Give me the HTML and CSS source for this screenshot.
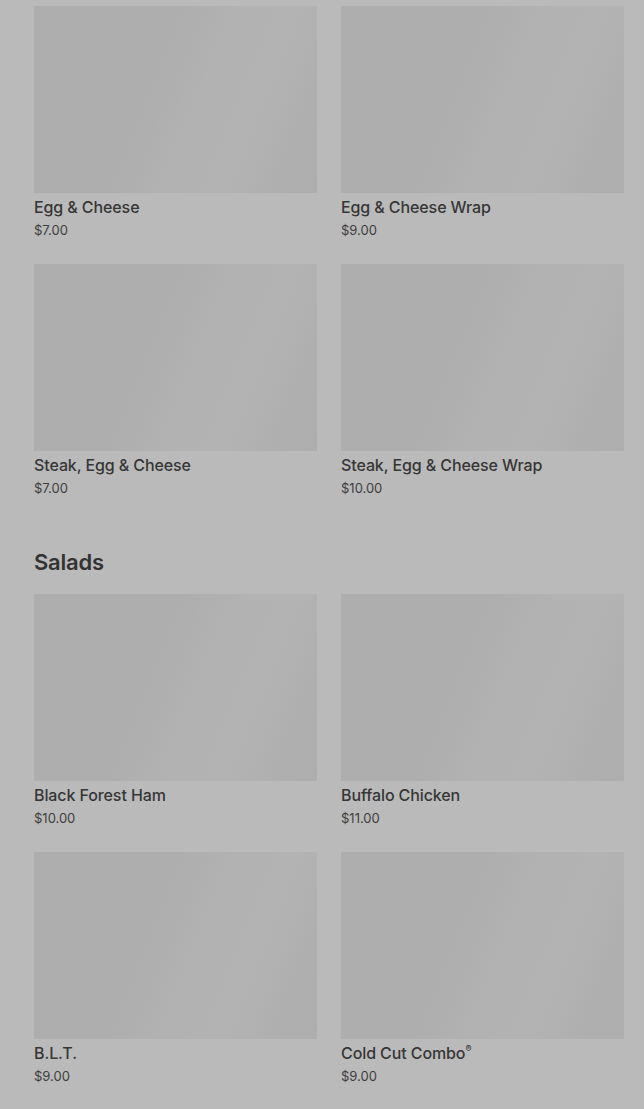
FILE: index.html
```html
<!DOCTYPE html>
<html lang="en">
<head>
<meta charset="utf-8">
<title>Menu</title>
<link rel="stylesheet" href="styles.css">
</head>
<body>
<main class="menu">
  <section class="section">
    <div class="grid">
      <div class="card"><div class="thumb"></div><div class="name">Egg &amp; Cheese</div><div class="price">$7.00</div></div>
      <div class="card"><div class="thumb"></div><div class="name">Egg &amp; Cheese Wrap</div><div class="price">$9.00</div></div>
      <div class="card"><div class="thumb"></div><div class="name">Steak, Egg &amp; Cheese</div><div class="price">$7.00</div></div>
      <div class="card"><div class="thumb"></div><div class="name">Steak, Egg &amp; Cheese Wrap</div><div class="price">$10.00</div></div>
    </div>
  </section>
  <section class="section">
    <h2 class="heading">Salads</h2>
    <div class="grid">
      <div class="card"><div class="thumb"></div><div class="name">Black Forest Ham</div><div class="price">$10.00</div></div>
      <div class="card"><div class="thumb"></div><div class="name">Buffalo Chicken</div><div class="price">$11.00</div></div>
      <div class="card"><div class="thumb"></div><div class="name">B.L.T.</div><div class="price">$9.00</div></div>
      <div class="card"><div class="thumb"></div><div class="name">Cold Cut Combo<sup class="reg">®</sup></div><div class="price">$9.00</div></div>
    </div>
  </section>
</main>
</body>
</html>
```

FILE: styles.css
```css
html, body {
  margin: 0;
  padding: 0;
  background: #bababa;
  height: 100%;
  overflow: hidden;
}
body {
  font-family: Inter, "Liberation Sans", sans-serif;
  color: #353535;
}
.menu {
  padding: 6px 20px 0 34px;
  display: flex;
  flex-direction: column;
  gap: 50px;
}
.section {
  display: flex;
  flex-direction: column;
}
.heading {
  margin: 0 0 16px 0;
  font-size: 22px;
  font-weight: 600;
  line-height: 32px;
  letter-spacing: -0.2px;
  color: #333;
}
.grid {
  display: grid;
  grid-template-columns: 1fr 1fr;
  column-gap: 24px;
  row-gap: 26px;
}
.card {
  display: flex;
  flex-direction: column;
}
.thumb {
  height: 187px;
  background: linear-gradient(112deg, #aeaeae 0%, #aeaeae 42%, #b2b2b2 58%, #b3b3b3 74%, #afafaf 88%, #aeaeae 100%);
}
.name {
  margin-top: 4px;
  font-size: 16px;
  font-weight: 500;
  line-height: 20px;
  letter-spacing: -0.1px;
  color: #363636;
}
.reg {
  font-size: 9px;
  vertical-align: top;
  line-height: 1;
  position: relative;
  top: 1px;
}
.price {
  margin-top: 5px;
  font-size: 13px;
  line-height: 16px;
  color: #3e3e3e;
}
```
